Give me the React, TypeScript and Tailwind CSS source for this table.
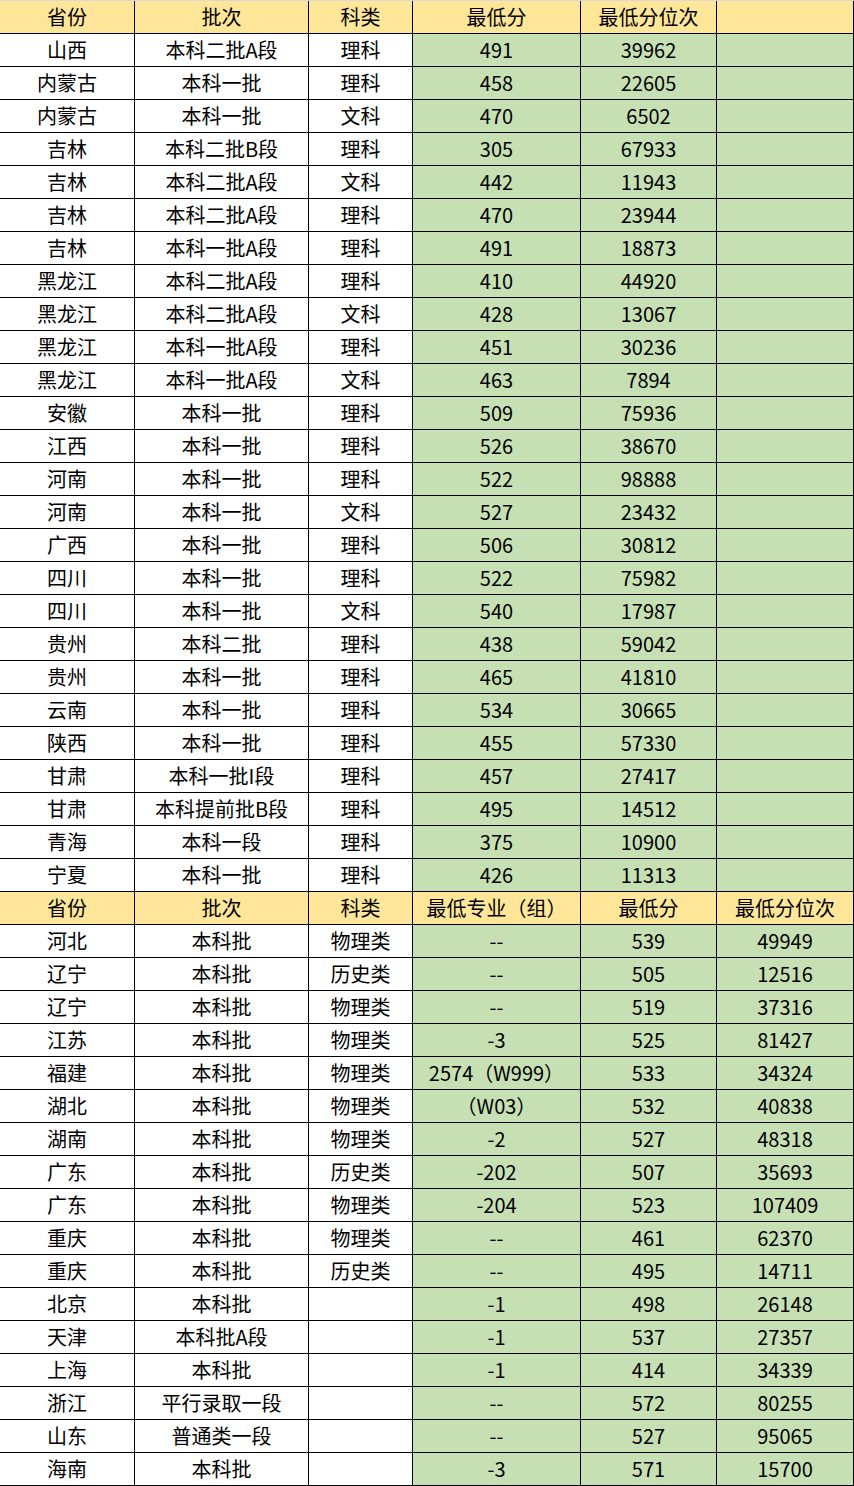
const widths = ['w-[135px]', 'w-[174px]', 'w-[104px]', 'w-[168px]', 'w-[136px]', 'w-[137px]']

const first: string[][] = [
  ['山西', '本科二批A段', '理科', '491', '39962'],
  ['内蒙古', '本科一批', '理科', '458', '22605'],
  ['内蒙古', '本科一批', '文科', '470', '6502'],
  ['吉林', '本科二批B段', '理科', '305', '67933'],
  ['吉林', '本科二批A段', '文科', '442', '11943'],
  ['吉林', '本科二批A段', '理科', '470', '23944'],
  ['吉林', '本科一批A段', '理科', '491', '18873'],
  ['黑龙江', '本科二批A段', '理科', '410', '44920'],
  ['黑龙江', '本科二批A段', '文科', '428', '13067'],
  ['黑龙江', '本科一批A段', '理科', '451', '30236'],
  ['黑龙江', '本科一批A段', '文科', '463', '7894'],
  ['安徽', '本科一批', '理科', '509', '75936'],
  ['江西', '本科一批', '理科', '526', '38670'],
  ['河南', '本科一批', '理科', '522', '98888'],
  ['河南', '本科一批', '文科', '527', '23432'],
  ['广西', '本科一批', '理科', '506', '30812'],
  ['四川', '本科一批', '理科', '522', '75982'],
  ['四川', '本科一批', '文科', '540', '17987'],
  ['贵州', '本科二批', '理科', '438', '59042'],
  ['贵州', '本科一批', '理科', '465', '41810'],
  ['云南', '本科一批', '理科', '534', '30665'],
  ['陕西', '本科一批', '理科', '455', '57330'],
  ['甘肃', '本科一批I段', '理科', '457', '27417'],
  ['甘肃', '本科提前批B段', '理科', '495', '14512'],
  ['青海', '本科一段', '理科', '375', '10900'],
  ['宁夏', '本科一批', '理科', '426', '11313'],
]

const second: string[][] = [
  ['河北', '本科批', '物理类', '--', '539', '49949'],
  ['辽宁', '本科批', '历史类', '--', '505', '12516'],
  ['辽宁', '本科批', '物理类', '--', '519', '37316'],
  ['江苏', '本科批', '物理类', '-3', '525', '81427'],
  ['福建', '本科批', '物理类', '2574（W999）', '533', '34324'],
  ['湖北', '本科批', '物理类', '（W03）', '532', '40838'],
  ['湖南', '本科批', '物理类', '-2', '527', '48318'],
  ['广东', '本科批', '历史类', '-202', '507', '35693'],
  ['广东', '本科批', '物理类', '-204', '523', '107409'],
  ['重庆', '本科批', '物理类', '--', '461', '62370'],
  ['重庆', '本科批', '历史类', '--', '495', '14711'],
  ['北京', '本科批', '', '-1', '498', '26148'],
  ['天津', '本科批A段', '', '-1', '537', '27357'],
  ['上海', '本科批', '', '-1', '414', '34339'],
  ['浙江', '平行录取一段', '', '--', '572', '80255'],
  ['山东', '普通类一段', '', '--', '527', '95065'],
  ['海南', '本科批', '', '-3', '571', '15700'],
]

function Row({ cells, kind }: { cells: string[]; kind: 'head' | 'data' }) {
  return (
    <div className="flex h-[33px]">
      {widths.map((w, i) => {
        const bg = kind === 'head' ? 'bg-[#ffe699]' : i >= 3 ? 'bg-[#c6e0b4]' : 'bg-white'
        return (
          <div
            key={i}
            className={`${w} ${bg} flex shrink-0 items-center justify-center border-b border-r border-black whitespace-nowrap`}
          >
            {cells[i] ?? ''}
          </div>
        )
      })}
    </div>
  )
}

export default function App() {
  return (
    <div
      className="w-[854px] border-t border-[#d9d9d9] bg-white text-[20px] leading-none text-black"
      style={{ fontFamily: '"Noto Sans CJK SC", "Noto Sans", sans-serif' }}
    >
      <Row kind="head" cells={['省份', '批次', '科类', '最低分', '最低分位次', '']} />
      {first.map((r, i) => (
        <Row key={'a' + i} kind="data" cells={[...r, '']} />
      ))}
      <Row kind="head" cells={['省份', '批次', '科类', '最低专业（组）', '最低分', '最低分位次']} />
      {second.map((r, i) => (
        <Row key={'b' + i} kind="data" cells={r} />
      ))}
    </div>
  )
}
